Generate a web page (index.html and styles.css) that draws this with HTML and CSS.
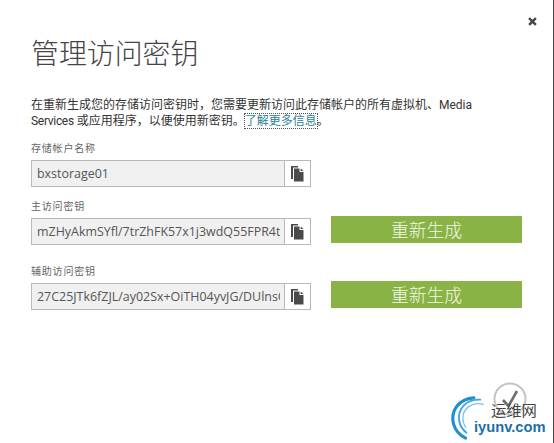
FILE: index.html
```html
<!DOCTYPE html>
<html lang="zh-CN">
<head>
<meta charset="utf-8">
<title>管理访问密钥</title>
<link rel="stylesheet" href="styles.css">
</head>
<body>
<main class="dialog">
  <button class="close" aria-label="关闭">
    <svg width="9" height="9" viewBox="0 0 10 10"><path d="M1.2 1.2 8.8 8.8M8.8 1.2 1.2 8.8" stroke="#444" stroke-width="2.6"/></svg>
  </button>
  <h1 class="title">管理访问密钥</h1>
  <p class="intro">在重新生成您的存储访问密钥时，您需要更新访问此存储帐户的所有虚拟机、Media<br><span class="services">Services</span> 或应用程序，以便使用新密钥。<a class="link" href="#">了解更多信息</a>。</p>

  <section class="row row-name">
    <div class="field">
      <div class="label">存储帐户名称</div>
      <div class="inputbox">
        <div class="value">bxstorage01</div>
        <div class="copy"><svg width="14" height="16" viewBox="0 0 14 16"><path d="M0 0H7V1.5H2V13H0Z M3 2.5H8.5V6H12.5V15.5H3Z M9.7 2.5 12.5 5H9.7Z" fill="#4a4a4a"/></svg></div>
      </div>
    </div>
  </section>

  <section class="row row-primary">
    <div class="field">
      <div class="label">主访问密钥</div>
      <div class="inputbox">
        <div class="value">mZHyAkmSYfl/7trZhFK57x1j3wdQ55FPR4tUvkq</div>
        <div class="copy"><svg width="14" height="16" viewBox="0 0 14 16"><path d="M0 0H7V1.5H2V13H0Z M3 2.5H8.5V6H12.5V15.5H3Z M9.7 2.5 12.5 5H9.7Z" fill="#4a4a4a"/></svg></div>
      </div>
    </div>
    <button class="regen">重新生成</button>
  </section>

  <section class="row row-secondary">
    <div class="field">
      <div class="label">辅助访问密钥</div>
      <div class="inputbox">
        <div class="value">27C25JTk6fZJL/ay02Sx+OiTH04yvJG/DUlnsQ8</div>
        <div class="copy"><svg width="14" height="16" viewBox="0 0 14 16"><path d="M0 0H7V1.5H2V13H0Z M3 2.5H8.5V6H12.5V15.5H3Z M9.7 2.5 12.5 5H9.7Z" fill="#4a4a4a"/></svg></div>
      </div>
    </div>
    <button class="regen">重新生成</button>
  </section>

  <div class="confirm">
    <svg width="36" height="36" viewBox="0 0 36 36"><circle cx="18" cy="18" r="15.5" fill="none" stroke="#c4c4c4" stroke-width="2"/><path d="M11 19 16.5 25 25 10" fill="none" stroke="#6e6e6e" stroke-width="2.6"/></svg>
  </div>
  <div class="watermark">
    <svg class="swoosh" width="44" height="46" viewBox="0 0 48 50"><g fill="none" stroke-linecap="round"><path d="M26 3C10 4 0 17 4 32 6 39 11 44 17 47" stroke="#1f8fd0" stroke-width="3.4"/><path d="M33 5C18 4 8 15 10 28 11 34 14 38 18 41" stroke="#3ba4dc" stroke-width="2"/><path d="M36 10C24 7 14 15 14 25 14 29 15 32 17 35" stroke="#7cc4ea" stroke-width="1.5"/></g></svg>
    <span class="wm-cn">运维网</span>
    <span class="wm-en">iyunv.com</span>
  </div>
</main>
</body>
</html>
```
FILE: styles.css
```css
* { box-sizing: border-box; }
html, body { margin: 0; height: 100%; }
body { background: #fff; overflow: hidden; }
.dialog {
  position: relative;
  width: 554px;
  height: 443px;
  padding: 35px 0 0 31px;
  border-right: 1px solid #444;
  font-family: "Noto Sans CJK SC", "Open Sans", sans-serif;
  color: #333;
}
.close {
  position: absolute;
  top: 17px;
  right: 16px;
  width: 9px;
  height: 9px;
  padding: 0;
  border: 0;
  background: none;
  display: flex;
}
.title {
  margin: 0;
  font-size: 27.9px;
  line-height: 34px;
  font-weight: 300;
  color: #444;
}
.intro {
  margin: 28px 0 0;
  font-size: 12px;
  line-height: 16px;
  color: #333;
  font-family: "Roboto", "Noto Sans CJK SC", sans-serif;
}
.services { letter-spacing: -0.3px; }
.link {
  color: #2b7f96;
  text-decoration: none;
  outline: 1px dotted #555;
}
.row { display: flex; align-items: flex-end; }
.row-name { margin-top: 12px; }
.row-primary { margin-top: 12px; }
.row-secondary { margin-top: 19px; }
.field { width: 280px; }
.label {
  font-size: 10px;
  line-height: 14px;
  color: #666;
  letter-spacing: 0.8px;
}
.inputbox {
  display: flex;
  height: 27px;
  margin-top: 5px;
  border: 1px solid #b9b9b9;
  background: #f0f0f0;
}
.value {
  flex: 1;
  min-width: 0;
  margin-right: 4px;
  padding-left: 5px;
  overflow: hidden;
  white-space: nowrap;
  font-family: "Open Sans", sans-serif;
  font-size: 12.45px;
  line-height: 25px;
  color: #555;
}
.copy {
  flex: none;
  width: 26px;
  background: #fff;
  border-left: 1px solid #b9b9b9;
  display: flex;
  align-items: center;
  justify-content: center;
}
.regen {
  width: 191px;
  height: 27px;
  margin: 0 0 2px 20px;
  padding: 0;
  border: 0;
  background: #8ab346;
  color: #f4f8e8;
  font-family: "Noto Sans CJK SC", sans-serif;
  font-size: 17.8px;
  font-weight: 300;
  line-height: 27px;
}
.confirm {
  position: absolute;
  left: 492px;
  top: 381px;
  width: 36px;
  height: 36px;
}
.watermark {
  position: absolute;
  left: 450px;
  top: 395px;
  width: 103px;
  height: 48px;
}
.swoosh { position: absolute; left: 0; top: 0; }
.wm-cn {
  position: absolute;
  left: 41px;
  top: 6px;
  font-size: 15.3px;
  line-height: 16px;
  color: #444;
}
.wm-en {
  position: absolute;
  left: 24px;
  top: 24px;
  font-family: "Liberation Sans", sans-serif;
  font-weight: 700;
  font-size: 14.7px;
  line-height: 16px;
  color: #1d6fa8;
}
```
